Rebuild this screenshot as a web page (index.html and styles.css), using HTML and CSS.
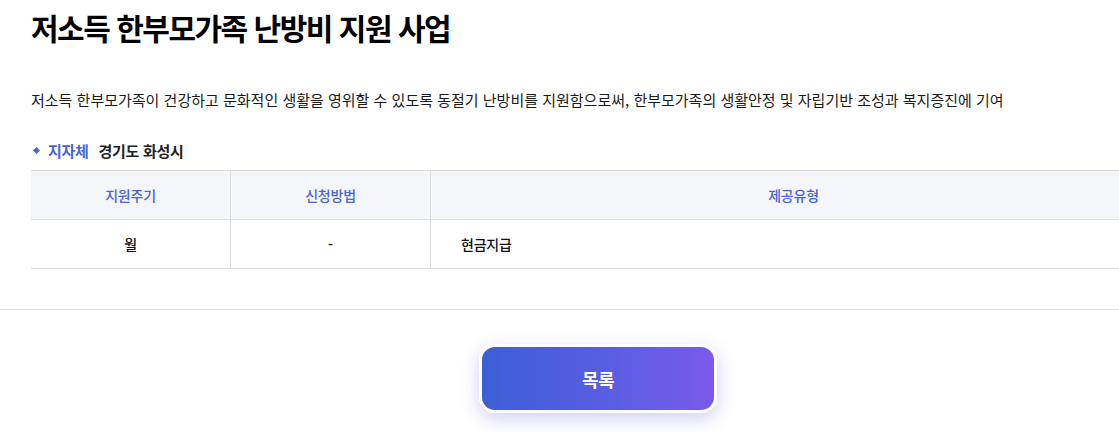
FILE: index.html
```html
<!DOCTYPE html>
<html lang="ko">
<head>
<meta charset="utf-8">
<link rel="stylesheet" href="styles.css">
</head>
<body>
<div class="page">
  <section class="content">
    <h1 class="title">저소득 한부모가족 난방비 지원 사업</h1>
    <p class="desc">저소득 한부모가족이 건강하고 문화적인 생활을 영위할 수 있도록 동절기 난방비를 지원함으로써, 한부모가족의 생활안정 및 자립기반 조성과 복지증진에 기여</p>
    <div class="meta">
      <span class="bullet"></span>
      <span class="meta-label">지자체</span>
      <span class="meta-value">경기도 화성시</span>
    </div>
    <table class="info">
      <thead>
        <tr>
          <th class="c1">지원주기</th>
          <th class="c2">신청방법</th>
          <th class="c3">제공유형</th>
        </tr>
      </thead>
      <tbody>
        <tr>
          <td class="c1 center">월</td>
          <td class="c2 center">-</td>
          <td class="c3 left">현금지급</td>
        </tr>
      </tbody>
    </table>
  </section>
  <div class="divider"></div>
  <div class="actions">
    <button class="list-btn">목록</button>
  </div>
</div>
</body>
</html>
```

FILE: styles.css
```css
html {
  overflow: hidden;
}
body {
  margin: 0;
  padding: 0;
  background: #ffffff;
  font-family: "Noto Sans CJK KR", "Noto Sans", sans-serif;
  color: #111111;
}
.page {
  width: 1196px;
  padding-bottom: 40px;
}
.content {
  padding: 0 40px 0 31px;
}
.title {
  margin: 0;
  padding-top: 7px;
  font-size: 30px;
  font-weight: 700;
  letter-spacing: -1.5px;
  line-height: 40px;
  color: #000000;
}
.desc {
  margin: 41px 0 0 0;
  font-size: 15px;
  line-height: 24px;
  letter-spacing: 0;
  color: #1a1a1a;
}
.meta {
  display: flex;
  align-items: center;
  margin-top: 26px;
  height: 24px;
  font-size: 15px;
  font-weight: 700;
  letter-spacing: -0.3px;
}
.bullet {
  width: 5px;
  height: 5px;
  background: #4a63d8;
  transform: rotate(45deg);
  margin: 0 9px 0 3px;
}
.meta-label {
  color: #4a63d8;
  margin-right: 10px;
}
.meta-value {
  color: #222222;
}
.info {
  margin-top: 8px;
  width: 1125px;
  border-collapse: collapse;
  font-size: 14px;
  letter-spacing: -0.2px;
}
.info th, .info td {
  height: 48px;
  padding: 0;
  border-top: 1px solid #dddddd;
  border-bottom: 1px solid #dddddd;
}
.info th + th, .info td + td {
  border-left: 1px solid #dddddd;
}
.info th {
  background: #f5f6fa;
  color: #4a63d8;
  font-weight: 500;
  text-align: center;
}
.info td {
  color: #111111;
  font-weight: 500;
}
.c1, .c2 { width: 199px; }
.center { text-align: center; }
.left { text-align: left; padding-left: 30px !important; }
.divider {
  margin-top: 40px;
  height: 1px;
  background: #e2e2e2;
}
.actions {
  display: flex;
  justify-content: center;
  padding-top: 34px;
}
.list-btn {
  width: 238px;
  height: 69px;
  border: 3px solid #ffffff;
  border-radius: 16px;
  background: linear-gradient(90deg, #3b5fd6 0%, #5a5de2 55%, #7a5aea 100%);
  box-shadow: 0 6px 18px rgba(90, 90, 210, 0.28);
  color: #ffffff;
  font-family: "Noto Sans CJK KR", sans-serif;
  font-size: 18px;
  font-weight: 700;
  letter-spacing: -0.5px;
  cursor: pointer;
}
```
